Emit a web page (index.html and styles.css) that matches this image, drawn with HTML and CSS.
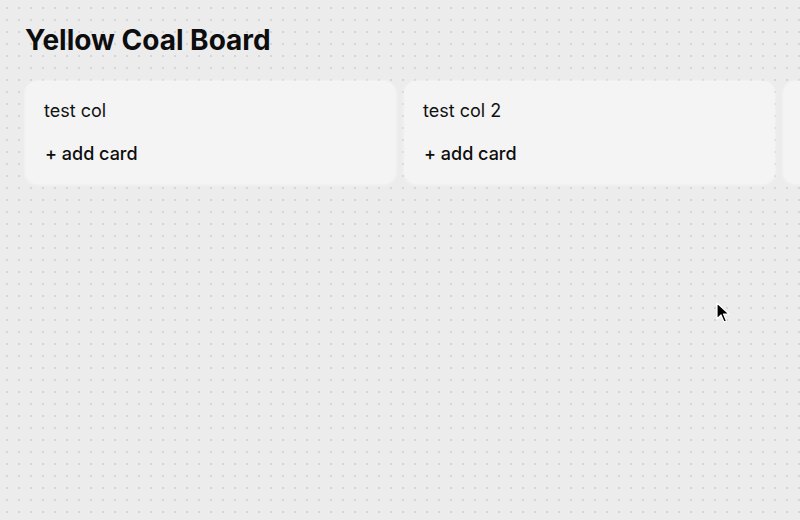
FILE: index.html
```html
<!DOCTYPE html>
<html>
<head>
<meta charset="utf-8">
<link rel="stylesheet" href="styles.css">
</head>
<body>
<div class="page">
  <h1 class="title">Yellow Coal Board</h1>
  <div class="board">
    <div class="column">
      <div class="col-title">test col</div>
      <div class="add-card">+ add card</div>
    </div>
    <div class="column">
      <div class="col-title">test col 2</div>
      <div class="add-card">+ add card</div>
    </div>
    <div class="column"></div>
  </div>
</div>
<svg class="cursor" width="14" height="22" viewBox="0 0 14 22">
  <path d="M1 1 L1 17 L5 13 L8 20 L10.5 19 L7.5 12 L13 12 Z" fill="#000" stroke="#fff" stroke-width="1.2" stroke-linejoin="round"/>
</svg>
</body>
</html>
```
FILE: styles.css
```css
html, body {
  margin: 0;
  padding: 0;
  width: 800px;
  height: 520px;
  overflow: hidden;
}
body {
  background-color: #ececed;
  background-image: radial-gradient(circle, #d6d6d8 1px, transparent 1.3px);
  background-size: 12px 12px;
  background-position: 1px 2px;
  font-family: Inter, "Noto Sans", sans-serif;
  color: #111;
  position: relative;
}
.page {
  padding: 24px 0 0 26px;
}
.title {
  margin: 0 0 0 -1px;
  font-size: 28px;
  font-weight: 700;
  line-height: 32px;
  letter-spacing: 0;
  color: #0d0d0d;
}
.board {
  display: flex;
  gap: 10px;
  margin-top: 26px;
}
.column {
  flex: 0 0 369px;
  height: 102px;
  box-sizing: border-box;
  background: #f4f4f4;
  border-radius: 12px;
  box-shadow: 0 0 3px 1px rgba(255,255,255,0.7), 0 1px 2px rgba(0,0,0,0.04);
  padding: 18px 18px;
  display: flex;
  flex-direction: column;
  gap: 21px;
}
.col-title {
  font-size: 18px;
  line-height: 22px;
  font-weight: 400;
  color: #111;
}
.add-card {
  font-size: 18px;
  line-height: 22px;
  font-weight: 500;
  color: #0d0d0d;
  padding-left: 1px;
}
.cursor {
  position: absolute;
  left: 716px;
  top: 302px;
}
```
